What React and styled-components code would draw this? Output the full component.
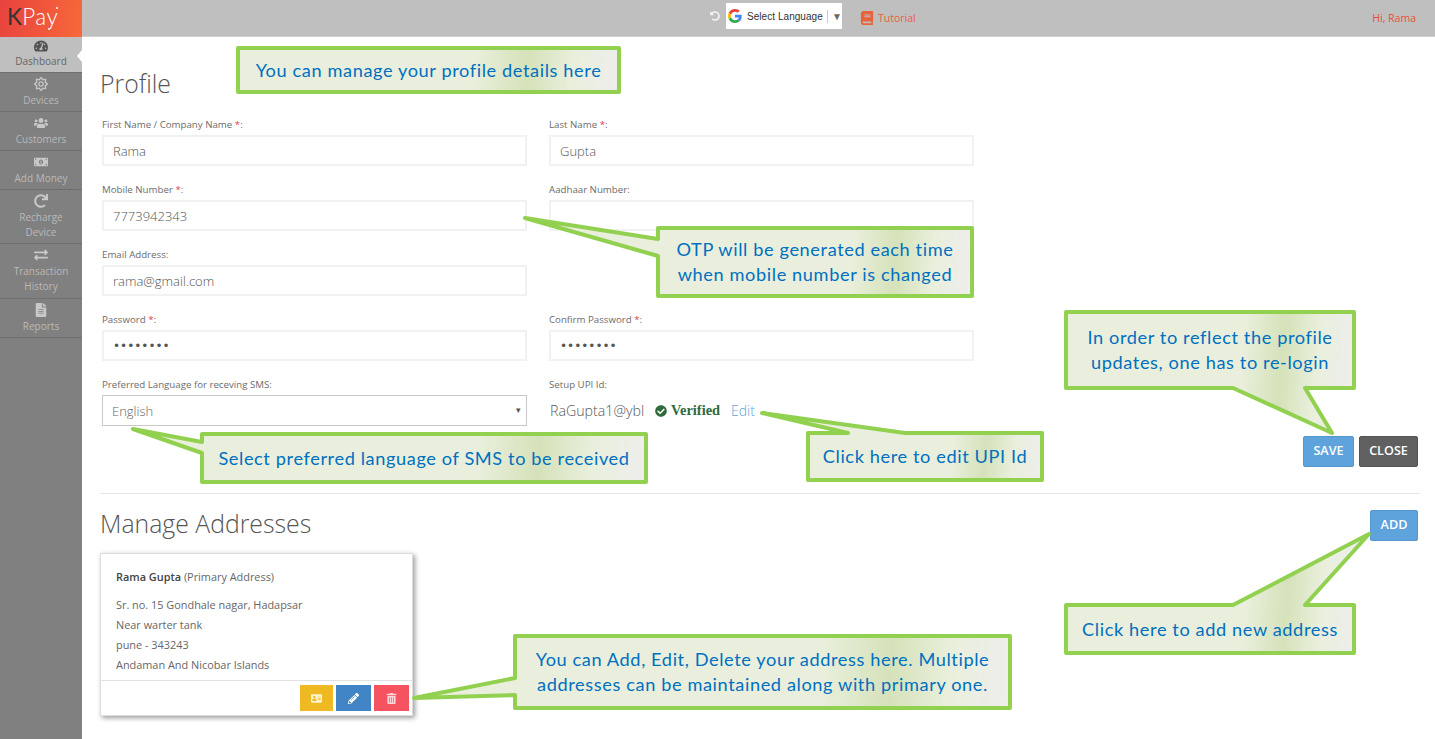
import React from "react";
import styled, { createGlobalStyle } from "styled-components";
import {
  FaTachometerAlt, FaRegSun, FaUsers, FaMoneyBillAlt, FaRedo, FaExchangeAlt, FaFileAlt,
  FaBook, FaUndoAlt, FaCheckCircle, FaAddressCard, FaPencilAlt, FaTrashAlt,
} from "react-icons/fa";

const UI = `"Open Sans", "Noto Sans", sans-serif`;

const Global = createGlobalStyle`
  html, body { margin: 0; padding: 0; height: 739px; overflow: hidden; background: #fff; }
  body { font-family: ${UI}; color: #666; }
  * { box-sizing: border-box; }
`;

const Page = styled.div`
  position: relative;
  display: grid;
  grid-template-columns: 82px 1fr;
  grid-template-rows: 37px 1fr;
  width: 1435px;
  height: 739px;
  overflow: hidden;
`;

const Logo = styled.div`
  position: relative;
  display: flex;
  align-items: center;
  padding: 0 0 3px 7px;
  background: linear-gradient(100deg, #e8433f 0%, #f0573b 55%, #f8693a 100%);
  font: 300 22.5px/1 Lato, sans-serif;
  color: #fff;
  letter-spacing: .4px;
  b { font-weight: 400; color: #2f3436; }
  &::before, &::after {
    content: "";
    position: absolute;
    width: 2px;
    height: 2px;
    border-radius: 50%;
    background: #fff;
  }
  &::before { left: 56px; top: 7px; }
  &::after { left: 48px; top: 28px; }
`;

const TopBar = styled.header`
  display: flex;
  align-items: center;
  background: #bfbfbf;
  border-bottom: 1px solid #d0d0d0;
  padding-left: 628px;
  padding-right: 19px;
`;

const UndoIcon = styled(FaUndoAlt)`
  color: #f4f4f4;
  font-size: 10px;
  margin-right: 6px;
  margin-top: -4px;
`;

const Translate = styled.div`
  display: flex;
  align-items: center;
  width: 116px;
  height: 26px;
  margin-top: -5px;
  padding: 1px 0 0 2px;
  background: #fff;
  font: 10px "Liberation Sans", sans-serif;
  letter-spacing: .05px;
  white-space: nowrap;
  color: #333;
  svg { margin-right: 5px; flex: none; }
`;

const Divider = styled.span`
  width: 1px;
  height: 13px;
  margin: 0 5px 0 4px;
  background: #ccc;
`;

const Caret = styled.span`
  font-size: 10px;
  color: #666;
`;

const Tutorial = styled.div`
  display: flex;
  align-items: center;
  gap: 4px;
  margin-left: 18px;
  font-size: 10.5px;
  color: #e8623a;
  svg { font-size: 14px; }
`;

const Greeting = styled.div`
  margin-left: auto;
  font-size: 10.5px;
  color: #e8503a;
`;

const Sidebar = styled.nav`
  background: #808080;
  display: flex;
  flex-direction: column;
`;

const NavItem = styled.div`
  position: relative;
  display: flex;
  flex-direction: column;
  align-items: center;
  height: ${(p) => p.$h}px;
  padding-top: ${(p) => (p.$active ? 2 : 4)}px;
  background: ${(p) => (p.$active ? "#bfbfbf" : "#808080")};
  border-bottom: 1px solid #6f6f6f;
  color: ${(p) => (p.$active ? "#666" : "#b9b9b9")};
  font-size: 10px;
  line-height: 15px;
  text-align: center;
  svg { font-size: 14px; color: ${(p) => (p.$active ? "#555" : "#c8c8c8")}; margin-bottom: ${(p) => (p.$active ? 1 : 2)}px; flex: none; }
  ${(p) =>
    p.$active &&
    `&::after {
      content: "";
      position: absolute;
      right: 0;
      top: 13px;
      border: 6px solid transparent;
      border-right: 5px solid #fff;
      border-left: 0;
    }`}
`;

const Main = styled.main`
  padding: 30px 15px 0 18px;
  background: #fff;
`;

const Title = styled.h1`
  margin: -1px 0 16px;
  font: 300 24.8px/34px ${UI};
  color: #555;
`;

const FormGrid = styled.div`
  display: grid;
  grid-template-columns: 425px 425px;
  column-gap: 22px;
  row-gap: 15px;
  padding-left: 2px;
`;

const Field = styled.div`
  display: flex;
  flex-direction: column;
  grid-column: ${(p) => p.$col || "auto"};
`;

const Label = styled.label`
  height: 17px;
  margin-bottom: 2px;
  font-size: 9.7px;
  line-height: 17px;
  color: #6c6c6c;
  em { font-style: normal; color: #e0404a; }
`;

const Input = styled.input`
  width: 100%;
  height: 31px;
  padding: 0 9px;
  border: 2px solid #f1f1f1;
  outline: none;
  background: #fff;
  font: 300 13px ${UI};
  color: #555;
  &[type="password"] { font: 12px "DejaVu Sans", sans-serif; }
`;

const SelectWrap = styled.div`
  position: relative;
  &::after {
    content: "▾";
    position: absolute;
    right: 6px;
    top: 8px;
    font-size: 9px;
    color: #555;
  }
`;

const Select = styled.select`
  appearance: none;
  width: 100%;
  height: 31px;
  padding: 0 9px;
  border: 1px solid #c8c8c8;
  background: #fff;
  font: 300 13px ${UI};
  color: #666;
`;

const UpiRow = styled.div`
  display: flex;
  align-items: center;
  height: 31px;
`;

const UpiValue = styled.span`
  font: 300 14.2px ${UI};
  color: #555;
  width: 106px;
  padding-left: 1px;
`;

const Verified = styled.span`
  display: inline-flex;
  align-items: center;
  gap: 4px;
  font: 700 14.4px "Liberation Serif", serif;
  color: #2f6b3c;
  svg { font-size: 12px; }
`;

const EditLink = styled.a`
  margin-left: 11px;
  font-size: 14px;
  font-weight: 300;
  color: #5f9fd8;
`;

const ButtonRow = styled.div`
  display: flex;
  justify-content: flex-end;
  gap: 5px;
  margin-top: 10px;
  padding-right: 2px;
`;

const Button = styled.button`
  width: ${(p) => p.$w}px;
  height: 31px;
  padding: 0 0 2px;
  border-radius: 2px;
  border: 1px solid ${(p) => (p.$dark ? "#555" : "#5596cf")};
  background: ${(p) => (p.$dark ? "#606060" : "#5fa3dd")};
  color: #fff;
  font: 600 12.6px ${UI};
`;

const Rule = styled.hr`
  margin: 26px 0 0;
  border: 0;
  border-top: 1px solid #e5e5e5;
`;

const SectionHead = styled.div`
  display: flex;
  align-items: center;
  justify-content: space-between;
  margin-top: 16px;
  padding-right: 2px;
`;

const SectionTitle = styled.h2`
  margin: -5px 0 0;
  font: 300 24.8px/31px ${UI};
  color: #555;
`;

const Card = styled.article`
  width: 313px;
  margin-top: 12px;
  border: 1px solid #ddd;
  background: #fff;
  box-shadow: 2px 2px 5px rgba(0, 0, 0, .4);
`;

const CardBody = styled.div`
  padding: 13px 15px 5px;
  font-size: 10.9px;
  line-height: 20px;
  color: #666;
`;

const CardName = styled.div`
  margin-bottom: 8px;
  b { font-weight: 600; color: #444; }
`;

const CardFooter = styled.div`
  display: flex;
  justify-content: flex-end;
  gap: 3px;
  padding: 4px 3px 4px;
  border-top: 1px solid #e2e2e2;
`;

const IconButton = styled.button`
  display: flex;
  align-items: center;
  justify-content: center;
  width: ${(p) => p.$w}px;
  height: 26px;
  padding: 0;
  border: 0;
  background: ${(p) => p.$bg};
  color: ${(p) => p.$fg};
  font-size: 11px;
`;

const CalloutBox = styled.div`
  position: absolute;
  left: ${(p) => p.$x}px;
  top: ${(p) => p.$y}px;
  width: ${(p) => p.$w}px;
  height: ${(p) => p.$h}px;
  display: flex;
  align-items: center;
  justify-content: center;
  text-align: center;
  font: 400 18.2px/25px Lato, "Open Sans", sans-serif;
  letter-spacing: .6px;
  color: #0070c0;
  white-space: pre;
  svg { position: absolute; left: 0; top: 0; overflow: visible; }
  span { position: relative; }
`;

function Callout({ id, x, y, w, h, side, tail, children }) {
  const local = (tail || []).map(([a, b]) => `${a - x},${b - y}`).join(" L");
  const ins = local ? ` L${local}` : "";
  const d =
    `M0,0` +
    (side === "top" ? ins : "") +
    ` L${w},0 L${w},${h}` +
    (side === "bottom" ? ins : "") +
    ` L0,${h}` +
    (side === "left" ? ins : "") +
    ` Z`;
  return (
    <CalloutBox $x={x} $y={y} $w={w} $h={h}>
      <svg width={w} height={h}>
        <defs>
          <linearGradient id={id} gradientUnits="userSpaceOnUse" x1="0" y1="0" x2={w} y2="24">
            <stop offset="0" stopColor="#e9efdc" />
            <stop offset=".62" stopColor="#e9efdc" />
            <stop offset=".76" stopColor="#d5e2ba" />
            <stop offset=".88" stopColor="#e9efdc" />
            <stop offset="1" stopColor="#eeeeec" />
          </linearGradient>
        </defs>
        <path d={d} fill={`url(#${id})`} stroke="#92d050" strokeWidth="4" strokeLinejoin="round" />
      </svg>
      <span>{children}</span>
    </CalloutBox>
  );
}

const GoogleG = () => (
  <svg width="14" height="14" viewBox="0 0 48 48">
    <path fill="#EA4335" d="M24 9.5c3.5 0 6.7 1.2 9.2 3.6l6.9-6.9C35.9 2.4 30.5 0 24 0 14.6 0 6.5 5.4 2.6 13.2l8 6.2C12.5 13.7 17.800 9.500 24 9.500z" />
    <path fill="#4285F4" d="M46.900 24.500c0-1.600-.1-3.100-.4-4.500H24v9h12.900c-.6 3-2.200 5.500-4.700 7.200l7.700 6c4.500-4.200 7-10.300 7-17.700z" />
    <path fill="#FBBC05" d="M10.500 28.600c-.5-1.400-.8-3-.8-4.600s.3-3.200.8-4.600l-8-6.200C.9 16.400 0 20.100 0 24s.9 7.600 2.600 10.800l7.900-6.200z" />
    <path fill="#34A853" d="M24 48c6.500 0 11.900-2.100 15.900-5.800l-7.700-6c-2.100 1.400-4.900 2.300-8.200 2.300-6.200 0-11.500-4.200-13.400-9.900l-8 6.200C6.500 42.600 14.600 48 24 48z" />
  </svg>
);

const nav = [
  { label: "Dashboard", Icon: FaTachometerAlt, h: 36, active: true },
  { label: "Devices", Icon: FaRegSun, h: 39 },
  { label: "Customers", Icon: FaUsers, h: 39 },
  { label: "Add Money", Icon: FaMoneyBillAlt, h: 39 },
  { label: "Recharge\nDevice", Icon: FaRedo, h: 54 },
  { label: "Transaction\nHistory", Icon: FaExchangeAlt, h: 55 },
  { label: "Reports", Icon: FaFileAlt, h: 39 },
];

const NavLabel = styled.span`
  white-space: pre-line;
`;

export default function App() {
  return (
    <Page>
      <Global />
      <Logo><span><b>K</b>Pay</span></Logo>
      <TopBar>
        <UndoIcon />
        <Translate>
          <GoogleG />
          Select Language
          <Divider />
          <Caret>▼</Caret>
        </Translate>
        <Tutorial><FaBook /> Tutorial</Tutorial>
        <Greeting>Hi, Rama</Greeting>
      </TopBar>
      <Sidebar>
        {nav.map(({ label, Icon, h, active }) => (
          <NavItem key={label} $h={h} $active={active}>
            <Icon />
            <NavLabel>{label}</NavLabel>
          </NavItem>
        ))}
      </Sidebar>
      <Main>
        <Title>Profile</Title>
        <FormGrid>
          <Field>
            <Label>First Name / Company Name <em>*</em>:</Label>
            <Input defaultValue="Rama" />
          </Field>
          <Field>
            <Label>Last Name <em>*</em>:</Label>
            <Input defaultValue="Gupta" />
          </Field>
          <Field>
            <Label>Mobile Number <em>*</em>:</Label>
            <Input defaultValue="7773942343" />
          </Field>
          <Field>
            <Label>Aadhaar Number:</Label>
            <Input />
          </Field>
          <Field $col="1">
            <Label>Email Address:</Label>
            <Input defaultValue="rama@gmail.com" />
          </Field>
          <Field $col="1">
            <Label>Password <em>*</em>:</Label>
            <Input type="password" defaultValue="12345678" />
          </Field>
          <Field>
            <Label>Confirm Password <em>*</em>:</Label>
            <Input type="password" defaultValue="12345678" />
          </Field>
          <Field>
            <Label>Preferred Language for receving SMS:</Label>
            <SelectWrap>
              <Select defaultValue="English"><option>English</option></Select>
            </SelectWrap>
          </Field>
          <Field>
            <Label>Setup UPI Id:</Label>
            <UpiRow>
              <UpiValue>RaGupta1@ybl</UpiValue>
              <Verified><FaCheckCircle /> Verified</Verified>
              <EditLink>Edit</EditLink>
            </UpiRow>
          </Field>
        </FormGrid>
        <ButtonRow>
          <Button $w={51}>SAVE</Button>
          <Button $w={59} $dark>CLOSE</Button>
        </ButtonRow>
        <Rule />
        <SectionHead>
          <SectionTitle>Manage Addresses</SectionTitle>
          <Button $w={48}>ADD</Button>
        </SectionHead>
        <Card>
          <CardBody>
            <CardName><b>Rama Gupta</b> (Primary Address)</CardName>
            <div>Sr. no. 15 Gondhale nagar, Hadapsar</div>
            <div>Near warter tank</div>
            <div>pune - 343243</div>
            <div>Andaman And Nicobar Islands</div>
          </CardBody>
          <CardFooter>
            <IconButton $w={33} $bg="#eeb922" $fg="#fdf3d0"><FaAddressCard /></IconButton>
            <IconButton $w={35} $bg="#4285c7" $fg="#fff"><FaPencilAlt /></IconButton>
            <IconButton $w={35} $bg="#f5535f" $fg="#fbd5d8"><FaTrashAlt /></IconButton>
          </CardFooter>
        </Card>
      </Main>

      <Callout id="c1" x={238} y={48} w={381} h={44}>You can manage your profile details here</Callout>
      <Callout id="c2" x={658} y={228} w={314} h={68} side="left" tail={[[658, 256], [525, 218], [658, 239]]}>{"OTP will be generated each time\nwhen mobile number is changed"}</Callout>
      <Callout id="c3" x={1066} y={312} w={288} h={76} side="bottom" tail={[[1305, 388], [1332, 433], [1233, 388]]}>{"In order to reflect the profile\nupdates, one has to re-login"}</Callout>
      <Callout id="c4" x={202} y={434} w={444} h={48} side="left" tail={[[202, 453], [133, 429], [202, 442]]}>Select preferred language of SMS to be received</Callout>
      <Callout id="c5" x={808} y={433} w={234} h={47} side="top" tail={[[848, 433], [762, 413], [905, 433]]}>Click here to edit UPI Id</Callout>
      <Callout id="c6" x={1066} y={605} w={288} h={48} side="top" tail={[[1233, 605], [1369, 534], [1305, 605]]}>Click here to add new address</Callout>
      <Callout id="c7" x={515} y={636} w={495} h={72} side="left" tail={[[515, 695], [414, 698], [515, 678]]}>{"You can Add, Edit, Delete your address here. Multiple\naddresses can be maintained along with primary one."}</Callout>
    </Page>
  );
}
